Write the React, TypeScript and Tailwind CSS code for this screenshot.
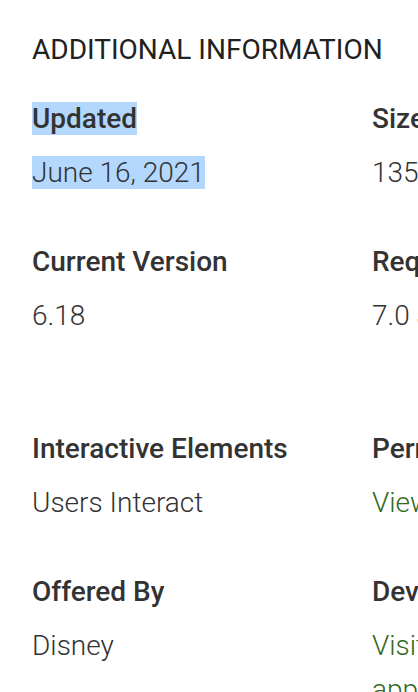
const font = { fontFamily: "Roboto, 'Liberation Sans', sans-serif" };

type Cell = {
  label: string;
  values: { text: string; link?: boolean; selected?: boolean; gap?: string }[];
  selected?: boolean;
};

const ROWS: Cell[][] = [
  [
    { label: "Updated", selected: true, values: [{ text: "June 16, 2021", selected: true }] },
    { label: "Size", values: [{ text: "135M" }] },
    { label: "Installs", values: [{ text: "1,000,000+" }] },
  ],
  [
    { label: "Current Version", values: [{ text: "6.18" }] },
    { label: "Requires Android", values: [{ text: "7.0 and up" }] },
    {
      label: "Content Rating",
      values: [{ text: "Rated for 3+" }, { text: "Learn More", link: true, gap: "mt-1" }],
    },
  ],
  [
    { label: "Interactive Elements", values: [{ text: "Users Interact" }] },
    { label: "Permissions", values: [{ text: "View details", link: true }] },
    { label: "Report", values: [{ text: "Flag as inappropriate", link: true }] },
  ],
  [
    { label: "Offered By", values: [{ text: "Disney" }] },
    {
      label: "Developer",
      values: [
        { text: "Visit website", link: true },
        { text: "apps@disney.com", link: true, gap: "mt-1" },
      ],
    },
  ],
];

function InfoCell({ cell }: { cell: Cell }) {
  return (
    <div className="w-[340px] shrink-0">
      <div className="text-[28px] leading-[40px] font-medium text-[#333333] whitespace-nowrap">
        <span className={cell.selected ? "bg-[#b4d7fe]" : ""}>{cell.label}</span>
      </div>
      {cell.values.map((v) => (
        <div
          key={v.text}
          className={`${v.gap ?? "mt-[14px]"} text-[28px] leading-[40px] font-light whitespace-nowrap ${
            v.link ? "text-[#33691e]" : "text-[#333333]"
          }`}
        >
          <span className={v.selected ? "bg-[#b4d7fe]" : ""}>{v.text}</span>
        </div>
      ))}
    </div>
  );
}

export default function App() {
  return (
    <div className="w-[418px] h-[692px] overflow-hidden bg-white" style={font}>
      <div className="pt-[30px] pl-[32px]">
        <h2 className="text-[28px] leading-[40px] font-normal text-[#212121] whitespace-nowrap">
          ADDITIONAL INFORMATION
        </h2>
        <div className="mt-[29px] flex flex-col gap-y-[49px]">
          {ROWS.map((row, i) => (
            <div key={i} className="flex">
              {row.map((cell) => (
                <InfoCell key={cell.label} cell={cell} />
              ))}
            </div>
          ))}
        </div>
      </div>
    </div>
  );
}
